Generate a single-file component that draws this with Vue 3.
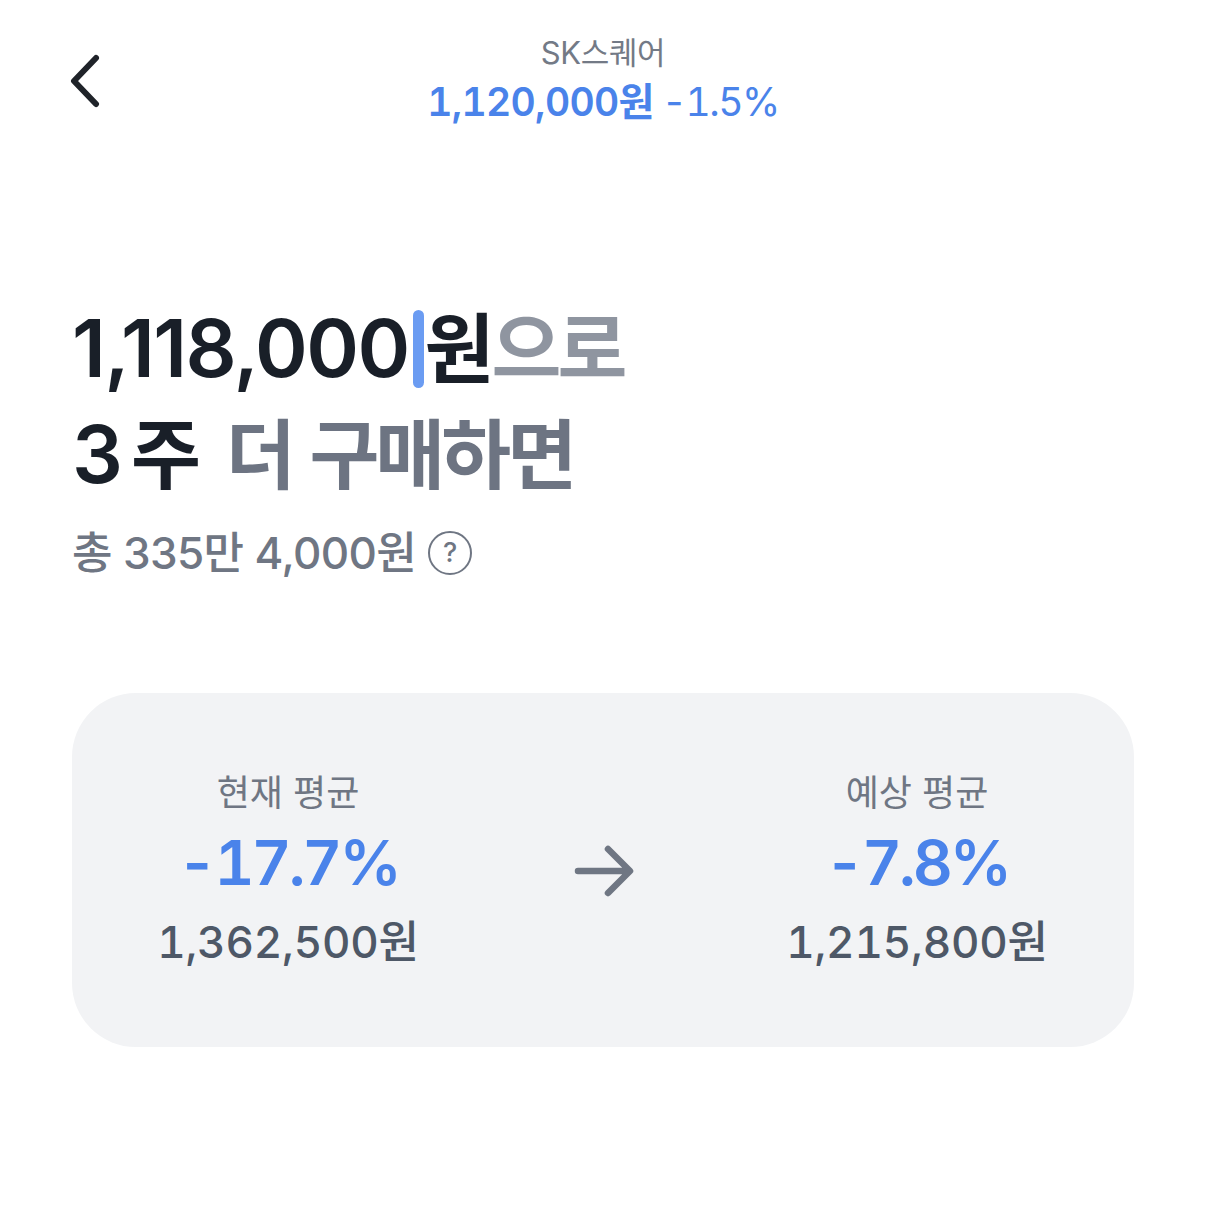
<script setup>
const columns = [
  { label: '현재 평균', rate: '-17.7%', price: '1,362,500원' },
  { label: '예상 평균', rate: '-7.8%', price: '1,215,800원' },
]
</script>

<template>
  <div class="page">
    <header class="top">
      <svg class="back" width="32" height="54" viewBox="0 0 32 54" fill="none">
        <path d="M27 4 L5 27 L27 50" stroke="#1f2329" stroke-width="6" stroke-linecap="round" stroke-linejoin="round" />
      </svg>
      <div class="title">
        <div class="name">SK스퀘어</div>
        <div class="quote"><b>1,120,000원</b><span class="delta">-1.5%</span></div>
      </div>
    </header>

    <section class="ask">
      <h1 class="line first">
        <span class="amount">1,118,000</span><i class="caret"></i><span class="won">원</span><span class="muted">으로</span>
      </h1>
      <h1 class="line second">
        <span class="num">3</span><span class="unit">주</span><span class="rest">더 구매하면</span>
      </h1>
      <div class="total">
        <span>총 335만 4,000원</span>
        <span class="help">?</span>
      </div>
    </section>

    <section class="card">
      <div class="col" v-for="(c, i) in columns" :key="c.label" :style="{ order: i * 2 }">
        <div class="label">{{ c.label }}</div>
        <div class="rate">{{ c.rate }}</div>
        <div class="price">{{ c.price }}</div>
      </div>
      <svg class="arrow" width="62" height="54" viewBox="0 0 62 54" fill="none">
        <path d="M4 27 H55 M34 5 L56 27 L34 49" stroke="#6f7683" stroke-width="6.5" stroke-linecap="round" stroke-linejoin="round" />
      </svg>
    </section>
  </div>
</template>

<style>
body {
  background: #fff;
}
</style>

<style scoped>
.page {
  width: 1206px;
  height: 1211px;
  box-sizing: border-box;
  padding: 32px 72px 0;
  font-family: Inter, "Noto Sans CJK KR", sans-serif;
  background: #fff;
  overflow: hidden;
}

.top {
  display: flex;
  justify-content: center;
  position: relative;
  height: 100px;
}

.back {
  position: absolute;
  left: -3px;
  top: 22px;
}

.title {
  text-align: center;
}

.name {
  font-size: 31px;
  line-height: 42px;
  color: #737a86;
  letter-spacing: -0.4px;
}

.quote {
  margin-top: 3px;
  font-size: 39px;
  line-height: 50px;
  color: #4a83ea;
  font-variant-numeric: tabular-nums;
}

.quote b {
  font-weight: 600;
  letter-spacing: -0.7px;
}

.delta {
  margin-left: 8px;
  letter-spacing: -1.5px;
}

.ask {
  margin-top: 164px;
}

.line {
  margin: 0;
  font-size: 80px;
  font-weight: 600;
  color: #191f28;
  white-space: nowrap;
  display: flex;
  align-items: baseline;
}

.first {
  line-height: 103px;
}

.second {
  line-height: 105px;
}

.amount {
  letter-spacing: -1.6px;
}

.caret {
  display: block;
  align-self: center;
  width: 11px;
  height: 78px;
  margin: 0 1px 0 4px;
  border-radius: 6px;
  background: #6b9cf2;
}

.won,
.muted,
.unit,
.rest {
  font-size: 76px;
  letter-spacing: -4px;
}

.muted {
  margin-left: 1px;
  color: #8f95a0;
}

.num {
  letter-spacing: 0;
}

.unit {
  margin-left: 8px;
}

.rest {
  color: #6d7482;
  margin-left: 29px;
  word-spacing: 2.5px;
}

.total {
  display: flex;
  align-items: center;
  gap: 12px;
  margin-top: 17px;
  font-size: 44px;
  line-height: 56px;
  color: #6f7683;
  font-weight: 500;
  letter-spacing: -0.6px;
}

.help {
  width: 40px;
  height: 40px;
  border: 2.5px solid #6f7683;
  border-radius: 50%;
  display: flex;
  align-items: center;
  justify-content: center;
  font-size: 27px;
  font-weight: 500;
  letter-spacing: 0;
}

.card {
  margin-top: 112px;
  height: 354px;
  border-radius: 64px;
  background: #f2f3f5;
  display: grid;
  grid-template-columns: 432px 1fr 434px;
  align-items: center;
  justify-items: center;
}

.col {
  text-align: center;
  padding-top: 2px;
}

.arrow {
  order: 1;
  margin: 2px 0 0 6px;
}

.label {
  font-size: 36px;
  line-height: 46px;
  color: #6f7683;
}

.rate {
  margin-top: 10px;
  font-size: 62px;
  font-weight: 630;
  line-height: 74px;
  color: #4a83ea;
  font-variant-numeric: tabular-nums;
  letter-spacing: -3px;
}

.price {
  margin-top: 12px;
  font-size: 44px;
  font-weight: 550;
  line-height: 60px;
  color: #4e5867;
  font-variant-numeric: tabular-nums;
  letter-spacing: -0.2px;
}
</style>
